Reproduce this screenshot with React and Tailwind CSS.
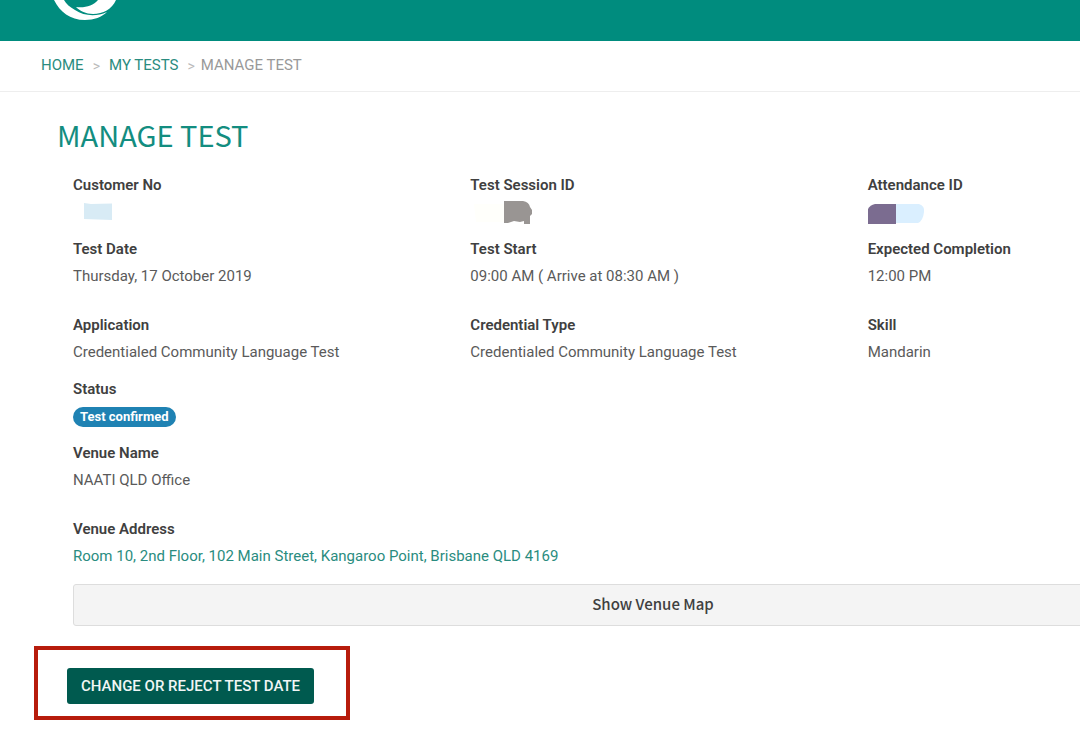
import React from "react";

const Logo = () => (
  <svg className="h-5 w-[70px]" viewBox="0 0 70 20" fill="none">
    <path
      d="M4 0 C10 12 20 20 35 20 C44 20 52 17 57 12 C46 17 34 16 25 10 C20 7 16 4 14 0 Z"
      fill="#fff"
    />
    <path
      d="M26 7 C35 8 43 6 48 0 L66 0 C62 9 53 14 43 14 C36 14 30 11 26 7 Z"
      fill="#fff"
    />
  </svg>
);

// blurred out ids
const CustomerNo = () => (
  <svg className="h-[27px] w-12" viewBox="0 0 48 27">
    <path d="M11 4 L18 5 L39 4.500 V21 L11 20 Z" fill="#d8ebf5" />
  </svg>
);

const SessionId = () => (
  <svg className="h-[27px] w-16" viewBox="0 0 64 27">
    <path d="M4 5 H34 V23 H6 Z" fill="#fffffb" />
    <path
      d="M34 2 H53 Q59 3 60 8 L62 11 V15 L60 17 V25 H54 V22 L50 23 L44 22 L38 24 H34 Z"
      fill="#999593"
    />
  </svg>
);

const AttendanceId = () => (
  <svg className="h-[27px] w-16" viewBox="0 0 64 27">
    <path d="M0 10 Q2 6 7 5 H28 V25 H0 Z" fill="#7b6c90" />
    <path d="M28 5 H51 Q57 7 56 13 Q55 22 50 24 H28 Z" fill="#daefff" />
  </svg>
);

const Field = ({ label, children }) => (
  <div>
    <dt className="font-semibold text-[#404040]">{label}</dt>
    <dd className="h-[27px] text-[#5a5a5a]">{children}</dd>
  </div>
);

const App = () => {
  return (
    <div className="overflow-x-hidden bg-white font-[Roboto,sans-serif] text-[15px] leading-[27px]">
      <header className="h-[41px] bg-[#008c7e] pl-[50px]">
        <Logo />
      </header>

      <nav
        aria-label="Breadcrumb"
        className="flex items-center border-b border-[#eeeeee] pb-3 pt-[11px] pl-[41px] text-[#999999]"
      >
        <a href="#home" className="text-[#2a8c80]">
          HOME
        </a>
        <span className="mx-[9px] text-sm text-[#bbbbbb]">&gt;</span>
        <a href="#tests" className="text-[#2a8c80]">
          MY TESTS
        </a>
        <span className="ml-[9px] mr-[6px] text-sm text-[#bbbbbb]">&gt;</span>
        <span>MANAGE TEST</span>
      </nav>

      <main className="min-w-[1266px] pt-[17px]">
        <h1 className="mb-[13px] pl-[57px] font-['Noto_Sans_CJK_SC',sans-serif] text-[29px] leading-[50px] text-[#138d80]">
          MANAGE TEST
        </h1>

        <div className="pl-[73px] pr-[33px]">
          <dl>
            <div className="mb-[10px] grid grid-cols-3 gap-8">
              <Field label="Customer No">
                <CustomerNo />
              </Field>
              <Field label="Test Session ID">
                <SessionId />
              </Field>
              <Field label="Attendance ID">
                <AttendanceId />
              </Field>
            </div>
            <div className="mb-[22px] grid grid-cols-3 gap-8">
              <Field label="Test Date">Thursday, 17 October 2019</Field>
              <Field label="Test Start">09:00 AM ( Arrive at 08:30 AM )</Field>
              <Field label="Expected Completion">12:00 PM</Field>
            </div>
            <div className="mb-[10px] grid grid-cols-3 gap-8">
              <Field label="Application">
                Credentialed Community Language Test
              </Field>
              <Field label="Credential Type">
                Credentialed Community Language Test
              </Field>
              <Field label="Skill">Mandarin</Field>
            </div>
            <div className="mb-[10px]">
              <Field label="Status">
                <span className="inline-flex h-5 items-center rounded-full bg-[#1f82b3] px-[7px] text-[13px] font-bold text-white">
                  Test confirmed
                </span>
              </Field>
            </div>
            <div className="mb-[22px]">
              <Field label="Venue Name">NAATI QLD Office</Field>
            </div>
            <div className="mb-[14px]">
              <Field label="Venue Address">
                <a href="#map" className="text-[#2a8c80]">
                  Room 10, 2nd Floor, 102 Main Street, Kangaroo Point, Brisbane
                  QLD 4169
                </a>
              </Field>
            </div>
          </dl>

          <button
            type="button"
            className="h-[42px] w-full rounded-[3px] border border-[#dddddd] bg-[#f4f4f4] pb-[3px] font-['Noto_Sans_CJK_SC',sans-serif] text-[15px] font-medium text-[#404040]"
          >
            Show Venue Map
          </button>
        </div>

        <div className="ml-[34px] mt-5 inline-block border-4 border-[#b71c0c] pb-3 pl-[29px] pr-8 pt-[18px]">
          <button
            type="button"
            className="block h-9 rounded-[3px] bg-[#005a4f] px-[14px] font-medium text-[#f0f6f5]"
          >
            CHANGE OR REJECT TEST DATE
          </button>
        </div>
      </main>
    </div>
  );
};

export default App;
